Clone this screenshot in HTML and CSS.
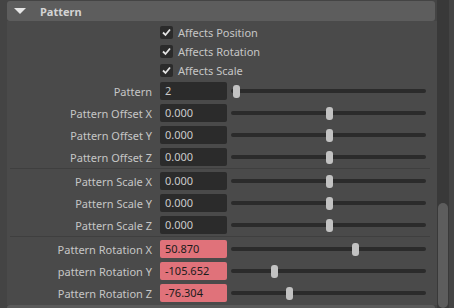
FILE: index.html
```html
<!DOCTYPE html>
<html lang="en">
<head>
    <meta charset="UTF-8">
    <title>Attribute Editor - Pattern</title>
    <link rel="stylesheet" href="styles.css">
</head>
<body>
    <div class="editor">
        <div class="panel">
            <div class="frame-header">
                <span class="arrow"></span>
                <span class="frame-title">Pattern</span>
            </div>

            <div class="frame-body">
                <div class="check-row">
                    <span class="checkbox"><svg width="13" height="13" viewBox="0 0 13 13"><path d="M3 6.5 L5.5 9 L10 3.5" fill="none" stroke="#e4e4e4" stroke-width="1.8"/></svg></span>
                    <span>Affects Position</span>
                </div>
                <div class="check-row">
                    <span class="checkbox"><svg width="13" height="13" viewBox="0 0 13 13"><path d="M3 6.5 L5.5 9 L10 3.5" fill="none" stroke="#e4e4e4" stroke-width="1.8"/></svg></span>
                    <span>Affects Rotation</span>
                </div>
                <div class="check-row">
                    <span class="checkbox"><svg width="13" height="13" viewBox="0 0 13 13"><path d="M3 6.5 L5.5 9 L10 3.5" fill="none" stroke="#e4e4e4" stroke-width="1.8"/></svg></span>
                    <span>Affects Scale</span>
                </div>

                <div class="field-row">
                    <label>Pattern</label>
                    <div class="field">2</div>
                    <div class="slider"><div class="track"></div><div class="thumb" style="left: 2px"></div></div>
                </div>
                <div class="field-row">
                    <label>Pattern Offset X</label>
                    <div class="field">0.000</div>
                    <div class="slider"><div class="track"></div><div class="thumb" style="left: 95px"></div></div>
                </div>
                <div class="field-row">
                    <label>Pattern Offset Y</label>
                    <div class="field">0.000</div>
                    <div class="slider"><div class="track"></div><div class="thumb" style="left: 95px"></div></div>
                </div>
                <div class="field-row">
                    <label>Pattern Offset Z</label>
                    <div class="field">0.000</div>
                    <div class="slider"><div class="track"></div><div class="thumb" style="left: 95px"></div></div>
                </div>

                <div class="separator"></div>

                <div class="field-row">
                    <label>Pattern Scale X</label>
                    <div class="field">0.000</div>
                    <div class="slider"><div class="track"></div><div class="thumb" style="left: 95px"></div></div>
                </div>
                <div class="field-row">
                    <label>Pattern Scale Y</label>
                    <div class="field">0.000</div>
                    <div class="slider"><div class="track"></div><div class="thumb" style="left: 95px"></div></div>
                </div>
                <div class="field-row">
                    <label>Pattern Scale Z</label>
                    <div class="field">0.000</div>
                    <div class="slider"><div class="track"></div><div class="thumb" style="left: 95px"></div></div>
                </div>

                <div class="separator"></div>

                <div class="field-row">
                    <label>Pattern Rotation X</label>
                    <div class="field keyed">50.870</div>
                    <div class="slider"><div class="track"></div><div class="thumb" style="left: 121px"></div></div>
                </div>
                <div class="field-row">
                    <label>pattern Rotation Y</label>
                    <div class="field keyed">-105.652</div>
                    <div class="slider"><div class="track"></div><div class="thumb" style="left: 40px"></div></div>
                </div>
                <div class="field-row">
                    <label>Pattern Rotation Z</label>
                    <div class="field keyed">-76.304</div>
                    <div class="slider"><div class="track"></div><div class="thumb" style="left: 55px"></div></div>
                </div>
            </div>

            <div class="frame-header next"></div>
        </div>

        <div class="scrollbar">
            <div class="scroll-thumb"></div>
        </div>
    </div>
</body>
</html>
```

FILE: styles.css
```css
* {
    margin: 0;
    padding: 0;
    box-sizing: border-box;
}

body {
    background: #444444;
    font-family: 'Noto Sans', 'DejaVu Sans', sans-serif;
    font-size: 11px;
    color: #c6c6c6;
    height: 308px;
    overflow: hidden;
}

.editor {
    display: flex;
    height: 308px;
}

.panel {
    margin-left: 7px;
    width: 430px;
}

/* collapsible frame header */
.frame-header {
    display: flex;
    align-items: center;
    width: 428px;
    height: 20px;
    margin-top: 1px;
    background: #5d5d5d;
    border-radius: 3px;
}

.frame-header.next {
    height: 3px;
    margin-top: 0;
    background: #5a5a5a;
    border-radius: 3px 3px 0 0;
}

.arrow {
    width: 0;
    height: 0;
    margin-left: 7px;
    border-left: 6px solid transparent;
    border-right: 6px solid transparent;
    border-top: 6px solid #e6e6e6;
}

.frame-title {
    margin-left: 14px;
    font-weight: bold;
    color: #d4d4d4;
}

.frame-body {
    background: #4a4a4a;
    padding: 2px 0 1px 0;
}

.check-row {
    display: flex;
    align-items: center;
    height: 19px;
    padding-left: 153px;
}

.checkbox {
    display: flex;
    width: 13px;
    height: 13px;
    margin-right: 5px;
    background: #2b2b2b;
    border-radius: 2px;
}

.field-row {
    display: flex;
    align-items: center;
    height: 22px;
}

.field-row label {
    width: 145px;
    margin-right: 8px;
    text-align: right;
}

.field {
    width: 67px;
    height: 18px;
    line-height: 18px;
    padding-left: 5px;
    background: #2b2b2b;
    border-radius: 2px;
    color: #cacaca;
}

.field.keyed {
    background: #e0727a;
    color: #1b1b1b;
}

.slider {
    position: relative;
    display: flex;
    align-items: center;
    width: 195px;
    height: 13px;
    margin-left: 4px;
}

.track {
    width: 100%;
    height: 4px;
    background: #2b2b2b;
    border-radius: 2px;
}

.thumb {
    position: absolute;
    top: 0;
    width: 7px;
    height: 13px;
    background: #c2c2c2;
    border-radius: 3px;
}

.separator {
    height: 2px;
    margin: 0 7px 0 3px;
    border-top: 1px solid #3f3f3f;
}

.scrollbar {
    width: 12px;
    height: 308px;
    background: #393939;
}

.scroll-thumb {
    width: 10px;
    height: 105px;
    margin: 203px 0 0 1px;
    background: #5d5d5d;
    border-radius: 5px;
}
```
